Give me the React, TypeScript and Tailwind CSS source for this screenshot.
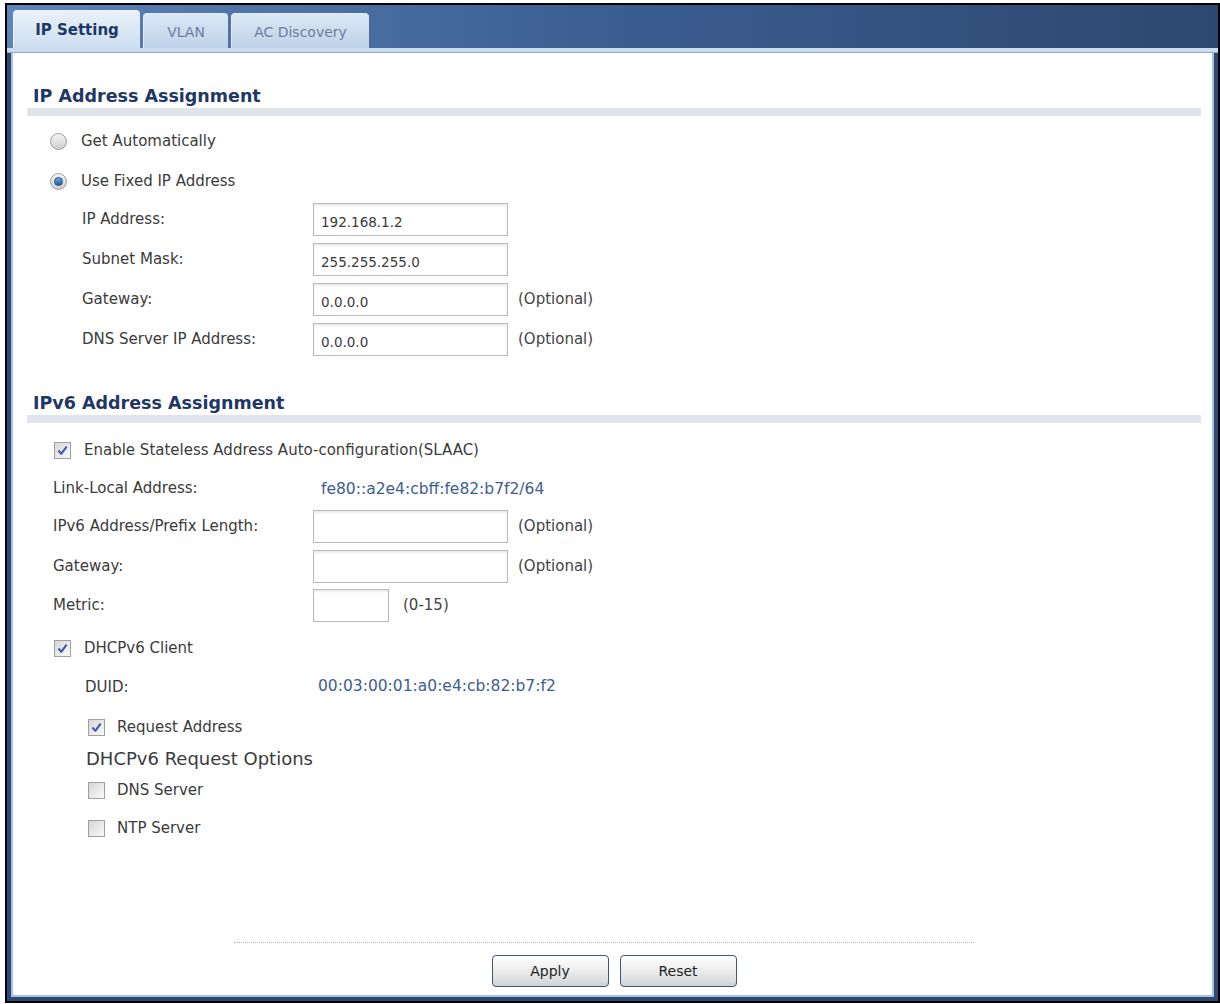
import { ReactNode } from "react";

const font = "font-['DejaVu_Sans',sans-serif]";

function Radio({ checked }: { checked?: boolean }) {
  return (
    <span className="flex h-[17px] w-[17px] items-center justify-center rounded-full border border-[#9a9a9a] bg-gradient-to-b from-[#f4f4f4] to-[#cfcfcf]">
      {checked && (
        <span className="h-[9px] w-[9px] rounded-full border border-[#1d4f86] bg-gradient-to-b from-[#6fa6dc] to-[#1f5c9c]" />
      )}
    </span>
  );
}

function Check({ checked }: { checked?: boolean }) {
  return (
    <span className="flex h-[17px] w-[17px] items-center justify-center border border-[#a0a0a0] bg-gradient-to-br from-[#d6d6d6] to-[#fafafa]">
      {checked && (
        <svg width="11" height="11" viewBox="0 0 11 11">
          <path
            d="M1.5 5.5 L4.3 8.8 L9.6 1.6"
            fill="none"
            stroke="#3a57a8"
            strokeWidth="2"
            strokeLinejoin="round"
          />
        </svg>
      )}
    </span>
  );
}

function TextBox({ value, w = "w-[195px]" }: { value?: string; w?: string }) {
  return (
    <div
      className={`${w} flex h-[33px] items-center border border-[#b9b9b9] bg-white px-[7px] pt-[6px] text-[13.5px] text-[#3a3a3a] shadow-[inset_0_2px_2px_rgba(0,0,0,0.08)]`}
    >
      {value}
    </div>
  );
}

function Heading({ children }: { children: ReactNode }) {
  return (
    <div>
      <div className="flex h-[20px] items-center pl-[6px] text-[17.5px] font-bold text-[#1e3765]">
        {children}
      </div>
      <div className="mt-[2px] h-[8px] bg-[#e1e4e9]" />
    </div>
  );
}

function Field({
  label,
  labelW,
  children,
  h = "h-[40px]",
  indent,
}: {
  label: string;
  labelW: string;
  children: ReactNode;
  h?: string;
  indent: string;
}) {
  return (
    <div className={`flex ${h} items-center ${indent}`}>
      <div className={`${labelW} shrink-0 text-[#3b3b3b]`}>{label}</div>
      {children}
    </div>
  );
}

const optional = <span className="ml-[10px] text-[#444]">(Optional)</span>;

export default function App() {
  return (
    <div className={`h-[1004px] w-[1220px] bg-white pl-[5px] pt-[3px] ${font} text-[15px]`}>
      <div className="flex h-[1000px] w-[1215px] flex-col border-2 border-black bg-[#2f4a72]">
        {/* tab strip */}
        <div className="flex h-[43px] items-end gap-[3px] bg-gradient-to-r from-[#5f84b9] via-[#3b5d90] to-[#2d4870] pl-[6px]">
          <div className="flex h-[38px] w-[127px] items-center justify-center rounded-t-[4px] border-l border-t border-[#eef4fb] bg-gradient-to-b from-[#e9f1fa] to-[#cddef1] pt-[2px] text-[15px] font-bold text-[#1d3865]">
            IP Setting
          </div>
          <div className="flex h-[35px] w-[85px] items-center justify-center rounded-t-[4px] border-l border-t border-[#e2ebf6] bg-gradient-to-b from-[#dbe7f4] to-[#bfd2e9] pt-[2px] text-[14px] text-[#6a7e9c]">
            VLAN
          </div>
          <div className="flex h-[35px] w-[138px] items-center justify-center rounded-t-[4px] border-l border-t border-[#e2ebf6] bg-gradient-to-b from-[#dbe7f4] to-[#bfd2e9] pt-[2px] text-[14px] text-[#6a7e9c]">
            AC Discovery
          </div>
        </div>
        <div className="h-[4px] bg-[#c9dcf2]" />
        <div className="h-px bg-[#8fa9c9]" />

        {/* page body */}
        <div className="flex flex-1 flex-col px-[4px] pb-[4px]">
          <div className="flex flex-1 flex-col border-x-2 border-b-2 border-[#a9c2e2] bg-white pl-[14px] pr-[11px]">
            <div className="pt-[33px]">
              <Heading>IP Address Assignment</Heading>

              <div className="flex h-[40px] items-center gap-[14px] pl-[23px] pt-[10px] text-[#3b3b3b]">
                <Radio />
                Get Automatically
              </div>
              <div className="flex h-[40px] items-center gap-[14px] pl-[23px] pt-[10px] text-[#3b3b3b]">
                <Radio checked />
                Use Fixed IP Address
              </div>
              <div className="pt-[3px]">
                <Field label="IP Address:" labelW="w-[231px]" indent="pl-[55px]">
                  <TextBox value="192.168.1.2" />
                </Field>
                <Field label="Subnet Mask:" labelW="w-[231px]" indent="pl-[55px]">
                  <TextBox value="255.255.255.0" />
                </Field>
                <Field label="Gateway:" labelW="w-[231px]" indent="pl-[55px]">
                  <TextBox value="0.0.0.0" />
                  {optional}
                </Field>
                <Field label="DNS Server IP Address:" labelW="w-[231px]" indent="pl-[55px]">
                  <TextBox value="0.0.0.0" />
                  {optional}
                </Field>
              </div>
            </div>

            <div className="pt-[34px]">
              <Heading>IPv6 Address Assignment</Heading>

              <div className="flex h-[40px] items-center gap-[13px] pl-[27px] pt-[14px] text-[#3b3b3b]">
                <Check checked />
                Enable Stateless Address Auto-configuration(SLAAC)
              </div>
              <Field label="Link-Local Address:" labelW="w-[268px]" indent="pl-[26px] pt-[8px]" h="h-[43px]">
                <span className="pt-[2px] text-[15.5px] text-[#3e5d90]">fe80::a2e4:cbff:fe82:b7f2/64</span>
              </Field>
              <Field label="IPv6 Address/Prefix Length:" labelW="w-[260px]" indent="pl-[26px]">
                <TextBox />
                {optional}
              </Field>
              <Field label="Gateway:" labelW="w-[260px]" indent="pl-[26px]" h="h-[41px]">
                <TextBox />
                {optional}
              </Field>
              <Field label="Metric:" labelW="w-[260px]" indent="pl-[26px]" h="h-[37px]">
                <TextBox w="w-[76px]" />
                <span className="ml-[14px] text-[#444]">(0-15)</span>
              </Field>
              <div className="flex h-[44px] items-center gap-[13px] pl-[27px] pt-[4px] text-[#3b3b3b]">
                <Check checked />
                DHCPv6 Client
              </div>
              <Field label="DUID:" labelW="w-[233px]" indent="pl-[58px]" h="h-[38px]">
                <span className="text-[15.5px] text-[#3e5d90]">00:03:00:01:a0:e4:cb:82:b7:f2</span>
              </Field>
              <div className="flex h-[40px] items-center gap-[12px] pl-[61px] pt-[2px] text-[#3b3b3b]">
                <Check checked />
                Request Address
              </div>
              <div className="flex h-[24px] items-center pl-[59px] text-[18px] text-[#3b3b3b]">
                DHCPv6 Request Options
              </div>
              <div className="flex h-[38px] items-center gap-[12px] pl-[61px] pt-[2px] text-[#3b3b3b]">
                <Check />
                DNS Server
              </div>
              <div className="flex h-[38px] items-center gap-[12px] pl-[61px] pt-[2px] text-[#3b3b3b]">
                <Check />
                NTP Server
              </div>
            </div>

            {/* footer buttons */}
            <div className="mt-auto flex flex-col items-center pb-[8px]">
              <div className="ml-[-20px] w-[740px] border-t border-dotted border-[#b5b5b5]" />
              <div className="mt-[12px] flex gap-[11px]">
                <button className="flex h-[32px] w-[117px] items-center justify-center rounded-[4px] border border-[#44566e] bg-gradient-to-b from-[#ffffff] via-[#ececec] to-[#cfd3d8] text-[14px] text-[#222]">
                  Apply
                </button>
                <button className="flex h-[32px] w-[117px] items-center justify-center rounded-[4px] border border-[#44566e] bg-gradient-to-b from-[#ffffff] via-[#ececec] to-[#cfd3d8] text-[14px] text-[#222]">
                  Reset
                </button>
              </div>
            </div>
          </div>
        </div>
      </div>
    </div>
  );
}
